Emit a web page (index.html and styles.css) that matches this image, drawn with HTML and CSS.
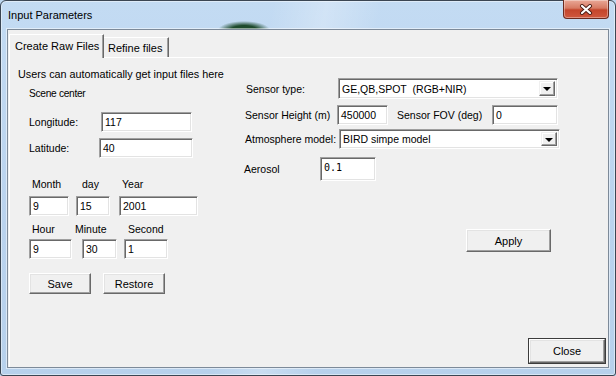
FILE: index.html
```html
<!DOCTYPE html>
<html lang="en">
<head>
  <meta charset="UTF-8">
  <title>Input Parameters</title>
  <link rel="stylesheet" href="styles.css">
</head>
<body>

  <div class="window">
    <div class="titlebar">
      <span class="title">Input Parameters</span>
      <div class="close-x">
        <svg width="14" height="11" viewBox="0 0 14 11">
          <path d="M3 2 L11 9 M11 2 L3 9" stroke="#4a1c14" stroke-width="4" stroke-linecap="round"/>
          <path d="M3 2 L11 9 M11 2 L3 9" stroke="#fff" stroke-width="2.2" stroke-linecap="round"/>
        </svg>
      </div>
    </div>

    <div class="client">
      <div class="tabs">
        <div class="tab active">Create Raw Files</div>
        <div class="tab">Refine files</div>
      </div>

      <div class="page">
        <div class="columns">
          <!-- left: scene center and date -->
          <div class="col-left">
            <p class="intro">Users can automatically get input files here</p>
            <p class="group-label">Scene center</p>
            <div class="row row-lon">
              <span class="lbl lbl-lon">Longitude:</span>
              <div class="edit w-lon">117</div>
            </div>
            <div class="row row-lat">
              <span class="lbl lbl-lat">Latitude:</span>
              <div class="edit w-lat">40</div>
            </div>

            <div class="label-row date-labels">
              <span class="cap cap-month">Month</span>
              <span class="cap cap-day">day</span>
              <span class="cap">Year</span>
            </div>
            <div class="row date-inputs">
              <div class="edit w-month">9</div>
              <div class="edit w-day">15</div>
              <div class="edit w-year">2001</div>
            </div>

            <div class="label-row time-labels">
              <span class="cap cap-hour">Hour</span>
              <span class="cap cap-minute">Minute</span>
              <span class="cap">Second</span>
            </div>
            <div class="row time-inputs">
              <div class="edit w-hour">9</div>
              <div class="edit w-minute">30</div>
              <div class="edit w-second">1</div>
            </div>

            <div class="row button-row">
              <div class="btn w-save">Save</div>
              <div class="btn w-restore">Restore</div>
            </div>
          </div>

          <!-- right: sensor and atmosphere -->
          <div class="col-right">
            <div class="row row-sensor">
              <span class="lbl lbl-sensor">Sensor type:</span>
              <div class="combo w-sensor">
                <span class="combo-text">GE,QB,SPOT&nbsp; (RGB+NIR)</span>
                <span class="combo-btn"><span class="tri"></span></span>
              </div>
            </div>
            <div class="row row-height">
              <span class="lbl lbl-height">Sensor Height (m)</span>
              <div class="edit w-height">450000</div>
              <span class="lbl lbl-fov">Sensor FOV (deg)</span>
              <div class="edit w-fov">0</div>
            </div>
            <div class="row row-atm">
              <span class="lbl lbl-atm">Atmosphere model:</span>
              <div class="combo w-atm">
                <span class="combo-text">BIRD simpe model</span>
                <span class="combo-btn"><span class="tri"></span></span>
              </div>
            </div>
            <div class="row row-aerosol">
              <span class="lbl lbl-aerosol">Aerosol</span>
              <div class="edit mono w-aerosol">0.1</div>
            </div>
            <div class="row apply-row">
              <div class="btn w-apply">Apply</div>
            </div>
          </div>
        </div>

        <div class="footer">
          <div class="btn btn-default w-close">Close</div>
        </div>
      </div>
    </div>
  </div>

</body>
</html>
```

FILE: styles.css
```css
/* Window frame */
body {
  margin: 0;
  width: 616px;
  height: 376px;
  overflow: hidden;
  font-family: 'Liberation Sans', Arial, sans-serif;
  font-size: 10.5px;
  color: #000;
  background: #bcd6ef;
}

.window {
  box-sizing: border-box;
  width: 616px;
  height: 376px;
  display: flex;
  flex-direction: column;
  border: 1px solid #3b4653;
  border-radius: 6px 6px 3px 3px;
  background:
    radial-gradient(ellipse 26px 9px at 243px 29px, #1d4a2c 0%, #1d4a2c 50%, rgba(29, 74, 44, 0) 100%),
    linear-gradient(100deg, rgba(255, 255, 255, 0) 40%, rgba(255, 255, 255, 0.25) 48%, rgba(255, 255, 255, 0) 56%),
    linear-gradient(to bottom, #c3dbf3, #bad3ee 60%, #b7d1ec);
  box-shadow: inset 0 0 0 1px rgba(255, 255, 255, 0.45);
}

.titlebar {
  height: 28px;
  display: flex;
  align-items: flex-start;
  padding-left: 7px;
}

.title {
  margin-top: 8px;
  font-size: 11px;
  line-height: 13px;
  color: #000;
}

.close-x {
  box-sizing: border-box;
  width: 46px;
  height: 19px;
  margin: -1px 6px 0 auto;
  display: flex;
  align-items: center;
  justify-content: center;
  border: 1px solid #6b2a1f;
  border-top: none;
  border-radius: 0 0 4px 4px;
  background: linear-gradient(to bottom, #e9a897 0%, #d77a63 45%, #c4452c 55%, #d0583e 100%);
  box-shadow: inset 0 0 0 1px rgba(255, 255, 255, 0.35);
}

.client {
  flex: 1;
  margin: 0 6px 7px 6px;
  display: flex;
  flex-direction: column;
  border: 1px solid #7d8a99;
  background: #f0f0f0;
  box-shadow: 0 0 0 1px rgba(255, 255, 255, 0.5);
}

/* Tabs */
.tabs {
  display: flex;
  align-items: flex-end;
  margin-top: 4px;
  padding-left: 1px;
}

.tab {
  box-sizing: border-box;
  height: 20px;
  width: 65px;
  padding: 4px 0 0 4px;
  font-size: 11px;
  line-height: 13px;
  white-space: nowrap;
  border-top: 1px solid #fff;
  border-right: 1px solid #696969;
  box-shadow: inset -1px 0 #a0a0a0;
}

.tab.active {
  position: relative;
  height: 24px;
  width: 95px;
  margin-bottom: -1px;
  padding: 5px 0 0 5px;
  border-left: 1px solid #fff;
  background: #f0f0f0;
}

.page {
  flex: 1;
  display: flex;
  flex-direction: column;
  margin-left: 1px;
  border-left: 1px solid #fff;
  border-top: 1px solid #fff;
}

.columns {
  display: flex;
}

.col-left {
  width: 226px;
  padding-left: 8px;
}

.col-right {
  flex: 1;
}

p {
  margin: 0;
}

.intro {
  margin-top: 9px;
  font-size: 10.8px;
  line-height: 14px;
}

.group-label {
  margin: 6px 0 0 11px;
  font-size: 10.2px;
  letter-spacing: -0.3px;
  line-height: 14px;
}

.row {
  display: flex;
  align-items: center;
}

.lbl {
  flex: none;
  line-height: 14px;
}

/* Classic sunken edit box */
.edit {
  box-sizing: border-box;
  height: 20px;
  padding: 0 0 0 3px;
  display: flex;
  align-items: center;
  background: #fff;
  border: 1px solid;
  border-color: #a0a0a0 #fff #fff #a0a0a0;
  box-shadow: inset 1px 1px #696969, inset -1px -1px #e3e3e3;
  font-size: 10.5px;
}

.mono {
  font-family: 'DejaVu Sans Mono', 'Liberation Mono', monospace;
  font-size: 10px;
  align-items: flex-start;
  padding-top: 4px;
}

/* Classic raised button */
.btn {
  box-sizing: border-box;
  height: 21px;
  display: flex;
  align-items: center;
  justify-content: center;
  background: #f0f0f0;
  border: 1px solid;
  border-color: #fff #696969 #696969 #fff;
  box-shadow: inset -1px -1px #a0a0a0, inset 1px 1px #e3e3e3;
  font-size: 11px;
}

.btn-default {
  outline: 1px solid #3c3c3c;
  outline-offset: 0;
}

/* Combo box */
.combo {
  box-sizing: border-box;
  height: 21px;
  display: flex;
  align-items: center;
  background: #fff;
  border: 1px solid;
  border-color: #a0a0a0 #fff #fff #a0a0a0;
  box-shadow: inset 1px 1px #696969, inset -1px -1px #e3e3e3;
  padding: 2px 2px 2px 3px;
}

.combo-text {
  flex: 1;
  white-space: nowrap;
}

.combo-btn {
  box-sizing: border-box;
  width: 16px;
  height: 100%;
  display: flex;
  align-items: center;
  justify-content: center;
  background: #f0f0f0;
  border: 1px solid;
  border-color: #f0f0f0 #696969 #696969 #f0f0f0;
  box-shadow: inset -1px -1px #a0a0a0, inset 1px 1px #fff;
}

.tri {
  width: 0;
  height: 0;
  margin-top: 1px;
  border-left: 4px solid transparent;
  border-right: 4px solid transparent;
  border-top: 4px solid #000;
}

/* Left column rows */
.row-lon { margin: 11px 0 0 11px; }
.lbl-lon { width: 72px; }
.w-lon { width: 91px; }

.row-lat { margin: 6px 0 0 11px; }
.lbl-lat { width: 70px; }
.w-lat { width: 94px; }

.label-row {
  display: flex;
  line-height: 14px;
  margin-left: 14px;
}

.cap { flex: none; }

.date-labels { margin-top: 19px; }
.cap-month { width: 50px; }
.cap-day { width: 40px; }

.date-inputs { margin: 5px 0 0 11px; }
.w-month { width: 40px; }
.w-day { width: 34px; margin-left: 7px; }
.w-year { width: 79px; margin-left: 9px; }

.time-labels { margin-top: 6px; }
.cap-hour { width: 43px; }
.cap-minute { width: 53px; }

.time-inputs { margin: 3px 0 0 11px; }
.w-hour { width: 43px; }
.w-minute { width: 35px; margin-left: 10px; }
.w-second { width: 44px; margin-left: 7px; }

.button-row { margin: 14px 0 0 11px; }
.w-save { width: 62px; }
.w-restore { width: 62px; margin-left: 12px; }

/* Right column rows */
.row-sensor { margin-top: 20px; }
.lbl-sensor { width: 92px; padding-left: 2px; }
.w-sensor { width: 220px; }

.row-height { margin-top: 6px; }
.lbl-height { width: 93px; padding-left: 1px; box-sizing: border-box; }
.w-height { width: 51px; }
.lbl-fov { width: 95px; margin-left: 9px; }
.w-fov { width: 66px; }

.row-atm { margin-top: 4px; }
.lbl-atm { width: 95px; padding-left: 1px; box-sizing: border-box; }
.w-atm { width: 221px; height: 20px; }

.row-aerosol { margin-top: 8px; }
.lbl-aerosol { width: 76px; }
.w-aerosol { width: 56px; height: 24px; }

.apply-row { margin-top: 48px; }
.w-apply { width: 85px; height: 23px; margin-left: 222px; }

.footer {
  margin-top: auto;
  display: flex;
  justify-content: flex-end;
  padding: 0 3px 4px 0;
}

.w-close {
  width: 76px;
  height: 24px;
}
```
